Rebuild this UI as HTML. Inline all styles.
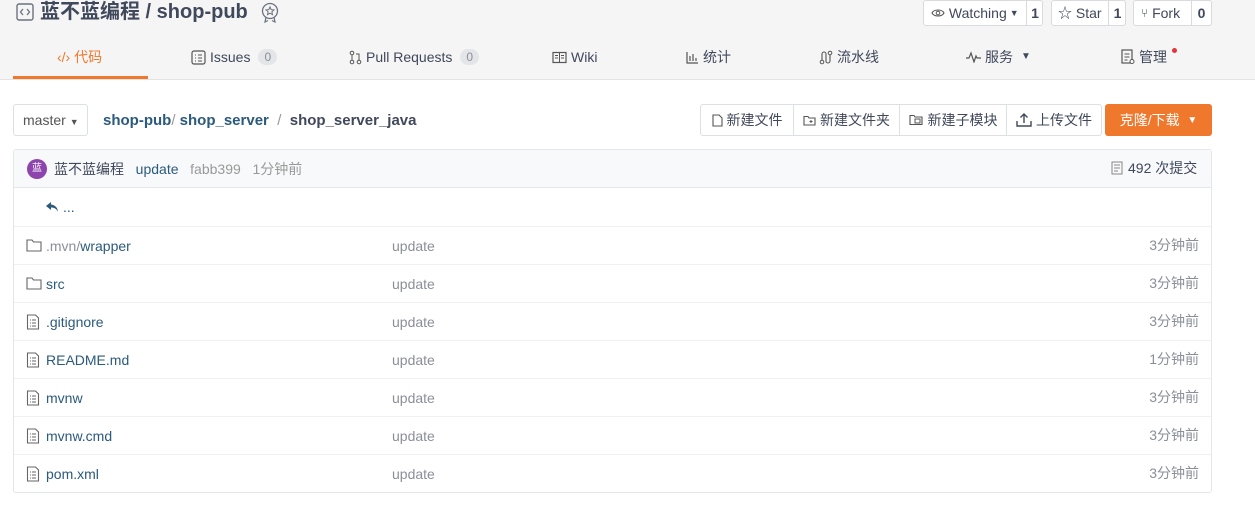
<!DOCTYPE html>
<html><head><meta charset="utf-8">
<style>
*{box-sizing:border-box;margin:0;padding:0}
body{width:1255px;height:510px;background:#fff;font-family:"Liberation Sans","Noto Sans CJK SC",sans-serif;color:#40485b;position:relative;overflow:hidden;font-size:14px}
.a{position:absolute;white-space:nowrap}
.hdr{position:absolute;left:0;top:0;width:1255px;height:80px;background:#f5f5f5;border-bottom:1px solid #e3e3e3}
.tab{position:absolute;top:47px;height:20px;font-size:14px;line-height:20px;color:#40485b;display:flex;align-items:center;gap:4px}
.badge{display:inline-block;background:#e3e5e8;color:#8a8f99;border-radius:9px;font-size:12px;line-height:16px;padding:0 6px;margin-left:4px}
.btn{position:absolute;border:1px solid #d8dadd;background:#fff;border-radius:3px;height:26px;display:flex;align-items:center;font-size:14px;color:#40485b}
.row{position:absolute;left:14px;width:1197px;height:38px;border-top:1px solid #f0f1f3}
.fn,.msg,.tm{position:absolute;top:9px;height:20px;line-height:20px;font-size:14px}
.fn{left:32px;color:#2b5a7d}
.msg{left:378px;color:#8a8f99}
.tm{right:12px;color:#8a8f99;top:8px}
.ic{position:absolute;left:12px;top:11px}
.tb{position:absolute;top:104px;height:32px;border:1px solid #dcdfe3;display:flex;align-items:center;justify-content:center;font-size:14px;color:#40485b;background:#fff;gap:4px}
</style></head><body>
<div class="hdr"></div>
<svg class="a" style="left:16px;top:3px" width="18" height="18" viewBox="0 0 18 18"><rect x="1" y="1" width="16" height="16" rx="2" fill="none" stroke="#6b7280" stroke-width="1.4"/><path d="M7 6L4.5 9 7 12M11 6l2.5 3-2.5 3" fill="none" stroke="#6b7280" stroke-width="1.3"/></svg>
<div class="a" style="left:40px;top:0;font-size:20px;font-weight:bold;color:#40485b;line-height:24px">蓝不蓝编程 / shop-pub</div>
<svg class="a" style="left:260px;top:2px" width="20" height="22" viewBox="0 0 20 22"><circle cx="10" cy="9" r="7.5" fill="none" stroke="#6b7280" stroke-width="1.3"/><path d="M10 5l1.2 2.6 2.8.3-2.1 1.9.6 2.8L10 11.2 7.5 12.6l.6-2.8L6 7.9l2.8-.3z" fill="none" stroke="#6b7280" stroke-width="1"/><path d="M6 15l-1 5 3-1.5M14 15l1 5-3-1.5" fill="none" stroke="#6b7280" stroke-width="1.2"/></svg>

<div class="btn" style="left:923px;top:0;width:120px;padding-left:7px">
<svg width="14" height="10" viewBox="0 0 14 10"><path d="M1 5c2-4 10-4 12 0-2 4-10 4-12 0z" fill="none" stroke="#555" stroke-width="1.1"/><circle cx="7" cy="5" r="1.8" fill="none" stroke="#555"/></svg>&nbsp;Watching <span style="font-size:9px;margin-left:3px">▼</span>
<span style="position:absolute;left:102px;top:0;height:24px;border-left:1px solid #d8dadd;width:17px;text-align:center;font-weight:bold;line-height:24px">1</span></div>
<div class="btn" style="left:1051px;top:0;width:75px;padding-left:6px">☆&nbsp;Star
<span style="position:absolute;left:56px;top:0;height:24px;border-left:1px solid #d8dadd;width:18px;text-align:center;font-weight:bold;line-height:24px">1</span></div>
<div class="btn" style="left:1133px;top:0;width:79px;padding-left:7px"><span style="font-size:12px">⑂</span>&nbsp;Fork
<span style="position:absolute;left:57px;top:0;height:24px;border-left:1px solid #d8dadd;width:20px;text-align:center;font-weight:bold;line-height:24px">0</span></div>

<div class="a" style="left:13px;top:76px;width:135px;height:3px;background:#f0782d"></div>
<div class="tab" style="left:57px;color:#f0782d">‹/› 代码</div>
<div class="tab" style="left:191px"><svg width="15" height="15" viewBox="0 0 15 15"><rect x="1" y="1" width="13" height="13" rx="2" fill="none" stroke="#555" stroke-width="1.2"/><path d="M4 5h1M7 5h4M4 8h1M7 8h4M4 11h1M7 11h4" stroke="#555" stroke-width="1.1"/></svg>Issues<span class="badge">0</span></div>
<div class="tab" style="left:349px"><svg width="13" height="15" viewBox="0 0 13 15"><circle cx="3" cy="3" r="1.8" fill="none" stroke="#555"/><circle cx="3" cy="12" r="1.8" fill="none" stroke="#555"/><circle cx="10" cy="12" r="1.8" fill="none" stroke="#555"/><path d="M3 5v5M10 10V4H7" fill="none" stroke="#555"/></svg>Pull Requests<span class="badge">0</span></div>
<div class="tab" style="left:552px"><svg width="15" height="13" viewBox="0 0 15 13"><rect x="1" y="1.5" width="13" height="10" fill="none" stroke="#555" stroke-width="1.2"/><path d="M7.5 1.5v10M3 4.5h3M3 7h3M9 4.5h3M9 7h3" stroke="#555"/></svg>Wiki</div>
<div class="tab" style="left:686px"><svg width="13" height="13" viewBox="0 0 13 13"><path d="M1 1v11h11M4 10V5M7 10V3M10 10V7" fill="none" stroke="#555" stroke-width="1.2"/></svg>统计</div>
<div class="tab" style="left:819px"><svg width="14" height="15" viewBox="0 0 14 15"><circle cx="3" cy="12" r="1.8" fill="none" stroke="#555"/><circle cx="11" cy="3" r="1.8" fill="none" stroke="#555"/><path d="M3 10V4a2 2 0 0 1 4 0v7a2 2 0 0 0 4 0V5" fill="none" stroke="#555" stroke-width="1.1"/></svg>流水线</div>
<div class="tab" style="left:966px"><svg width="15" height="12" viewBox="0 0 15 12"><path d="M0 7h3l2-5 3 9 2-6 1 2h4" fill="none" stroke="#555" stroke-width="1.2"/></svg>服务 <span style="font-size:10px;margin-left:4px">▼</span></div>
<div class="tab" style="left:1121px"><svg width="14" height="16" viewBox="0 0 14 16"><rect x="1" y="1" width="10" height="13" fill="none" stroke="#555" stroke-width="1.2"/><path d="M3.5 5h5M3.5 8h5M3.5 11h3" stroke="#555"/><circle cx="11" cy="12.5" r="2" fill="#fff" stroke="#555"/></svg>管理</div>
<div class="a" style="left:1172px;top:48px;width:5px;height:5px;border-radius:50%;background:#e5343d"></div>

<div class="a" style="left:13px;top:104px;width:75px;height:32px;border:1px solid #dcdfe3;border-radius:3px;padding:7px 9px;color:#555">master <span style="font-size:9px">▼</span></div>
<div class="a" style="left:103px;top:112px;font-size:15px;color:#2b5a7d"><b>shop-pub</b><span style="color:#999;font-weight:normal">/ </span><b>shop_server</b><span style="color:#999">&nbsp; /&nbsp; </span><b style="color:#40485b">shop_server_java</b></div>

<div class="tb" style="left:700px;width:94px;border-radius:3px 0 0 3px"><svg width="11" height="13" viewBox="0 0 11 13"><path d="M1 1h6l3 3v8H1z" fill="none" stroke="#555" stroke-width="1.1"/></svg>新建文件</div>
<div class="tb" style="left:793px;width:107px"><svg width="13" height="11" viewBox="0 0 13 11"><path d="M1 1.5h4l1 1.5h6v7H1z" fill="none" stroke="#555" stroke-width="1.1"/><path d="M8 5v3M6.5 6.5h3" stroke="#555"/></svg>新建文件夹</div>
<div class="tb" style="left:899px;width:108px"><svg width="15" height="12" viewBox="0 0 15 12"><path d="M1 1.5h4l1 1.5h7v7.5H1z" fill="none" stroke="#555" stroke-width="1.1"/><rect x="6" y="5" width="5" height="4" fill="none" stroke="#555"/></svg>新建子模块</div>
<div class="tb" style="left:1006px;width:96px;border-radius:0 3px 3px 0"><svg width="16" height="14" viewBox="0 0 16 14"><path d="M1 8v5h14V8M8 10V1M4.5 4.5L8 1l3.5 3.5" fill="none" stroke="#40485b" stroke-width="1.4"/></svg>上传文件</div>
<div class="a" style="left:1105px;top:104px;width:107px;height:32px;background:#f0782d;border-radius:3px;color:#fff;font-size:14px;display:flex;align-items:center;justify-content:center">克隆/下载 &nbsp;<span style="font-size:10px">▼</span></div>

<div class="a" style="left:13px;top:149px;width:1199px;height:344px;border:1px solid #e3e6ea;border-radius:3px"></div>
<div class="a" style="left:14px;top:150px;width:1197px;height:38px;background:#f8f9fa;border-bottom:1px solid #e3e6ea"></div>
<div class="a" style="left:27px;top:159px;width:20px;height:20px;border-radius:50%;background:#8e44ad;color:#fff;font-size:10px;text-align:center;line-height:20px">蓝</div>
<div class="a" style="left:54px;top:159px;color:#40485b;line-height:20px">蓝不蓝编程 &nbsp;&nbsp;<span style="color:#2b5a7d">update</span>&nbsp;&nbsp; <span style="color:#999">fabb399 &nbsp; 1分钟前</span></div>
<div class="a" style="left:1111px;top:158px;color:#40485b;line-height:20px;display:flex;align-items:center;gap:5px"><svg width="12" height="14" viewBox="0 0 12 14"><path d="M1 1h10v12H1zM3 4h6M3 7h6M3 10h4" fill="none" stroke="#888"/></svg>492 次提交</div>

<div class="a" style="left:45px;top:199px;color:#2b5a7d;font-size:14px;display:flex;align-items:center;gap:4px"><svg width="14" height="12" viewBox="0 0 14 12"><path d="M6 1L1 5l5 4V6.5c3 0 5 1 7 4-0.5-4-3-6.5-7-7z" fill="#2b5a7d"/></svg>...</div>

<div class="row" style="top:226px"><svg class="ic" width="16" height="14" viewBox="0 0 16 14"><path d="M1 2h5l1.5 2H15v9H1z" fill="none" stroke="#666" stroke-width="1.1"/></svg><span class="fn"><span style="color:#8a8f99">.mvn/</span>wrapper</span><span class="msg">update</span><span class="tm">3分钟前</span></div>
<div class="row" style="top:264px"><svg class="ic" width="16" height="14" viewBox="0 0 16 14"><path d="M1 2h5l1.5 2H15v9H1z" fill="none" stroke="#666" stroke-width="1.1"/></svg><span class="fn">src</span><span class="msg">update</span><span class="tm">3分钟前</span></div>
<div class="row" style="top:302px"><svg class="ic" width="14" height="16" viewBox="0 0 14 16"><path d="M1.5 1h8l3 3v11h-11z" fill="none" stroke="#666" stroke-width="1.1"/><path d="M4 6h1M6 6h4M4 9h1M6 9h4M4 12h1M6 12h4" stroke="#666"/></svg><span class="fn">.gitignore</span><span class="msg">update</span><span class="tm">3分钟前</span></div>
<div class="row" style="top:340px"><svg class="ic" width="14" height="16" viewBox="0 0 14 16"><path d="M1.5 1h8l3 3v11h-11z" fill="none" stroke="#666" stroke-width="1.1"/><path d="M4 6h1M6 6h4M4 9h1M6 9h4M4 12h1M6 12h4" stroke="#666"/></svg><span class="fn">README.md</span><span class="msg">update</span><span class="tm">1分钟前</span></div>
<div class="row" style="top:378px"><svg class="ic" width="14" height="16" viewBox="0 0 14 16"><path d="M1.5 1h8l3 3v11h-11z" fill="none" stroke="#666" stroke-width="1.1"/><path d="M4 6h1M6 6h4M4 9h1M6 9h4M4 12h1M6 12h4" stroke="#666"/></svg><span class="fn">mvnw</span><span class="msg">update</span><span class="tm">3分钟前</span></div>
<div class="row" style="top:416px"><svg class="ic" width="14" height="16" viewBox="0 0 14 16"><path d="M1.5 1h8l3 3v11h-11z" fill="none" stroke="#666" stroke-width="1.1"/><path d="M4 6h1M6 6h4M4 9h1M6 9h4M4 12h1M6 12h4" stroke="#666"/></svg><span class="fn">mvnw.cmd</span><span class="msg">update</span><span class="tm">3分钟前</span></div>
<div class="row" style="top:454px"><svg class="ic" width="14" height="16" viewBox="0 0 14 16"><path d="M1.5 1h8l3 3v11h-11z" fill="none" stroke="#666" stroke-width="1.1"/><path d="M4 6h1M6 6h4M4 9h1M6 9h4M4 12h1M6 12h4" stroke="#666"/></svg><span class="fn">pom.xml</span><span class="msg">update</span><span class="tm">3分钟前</span></div>
</body></html>
